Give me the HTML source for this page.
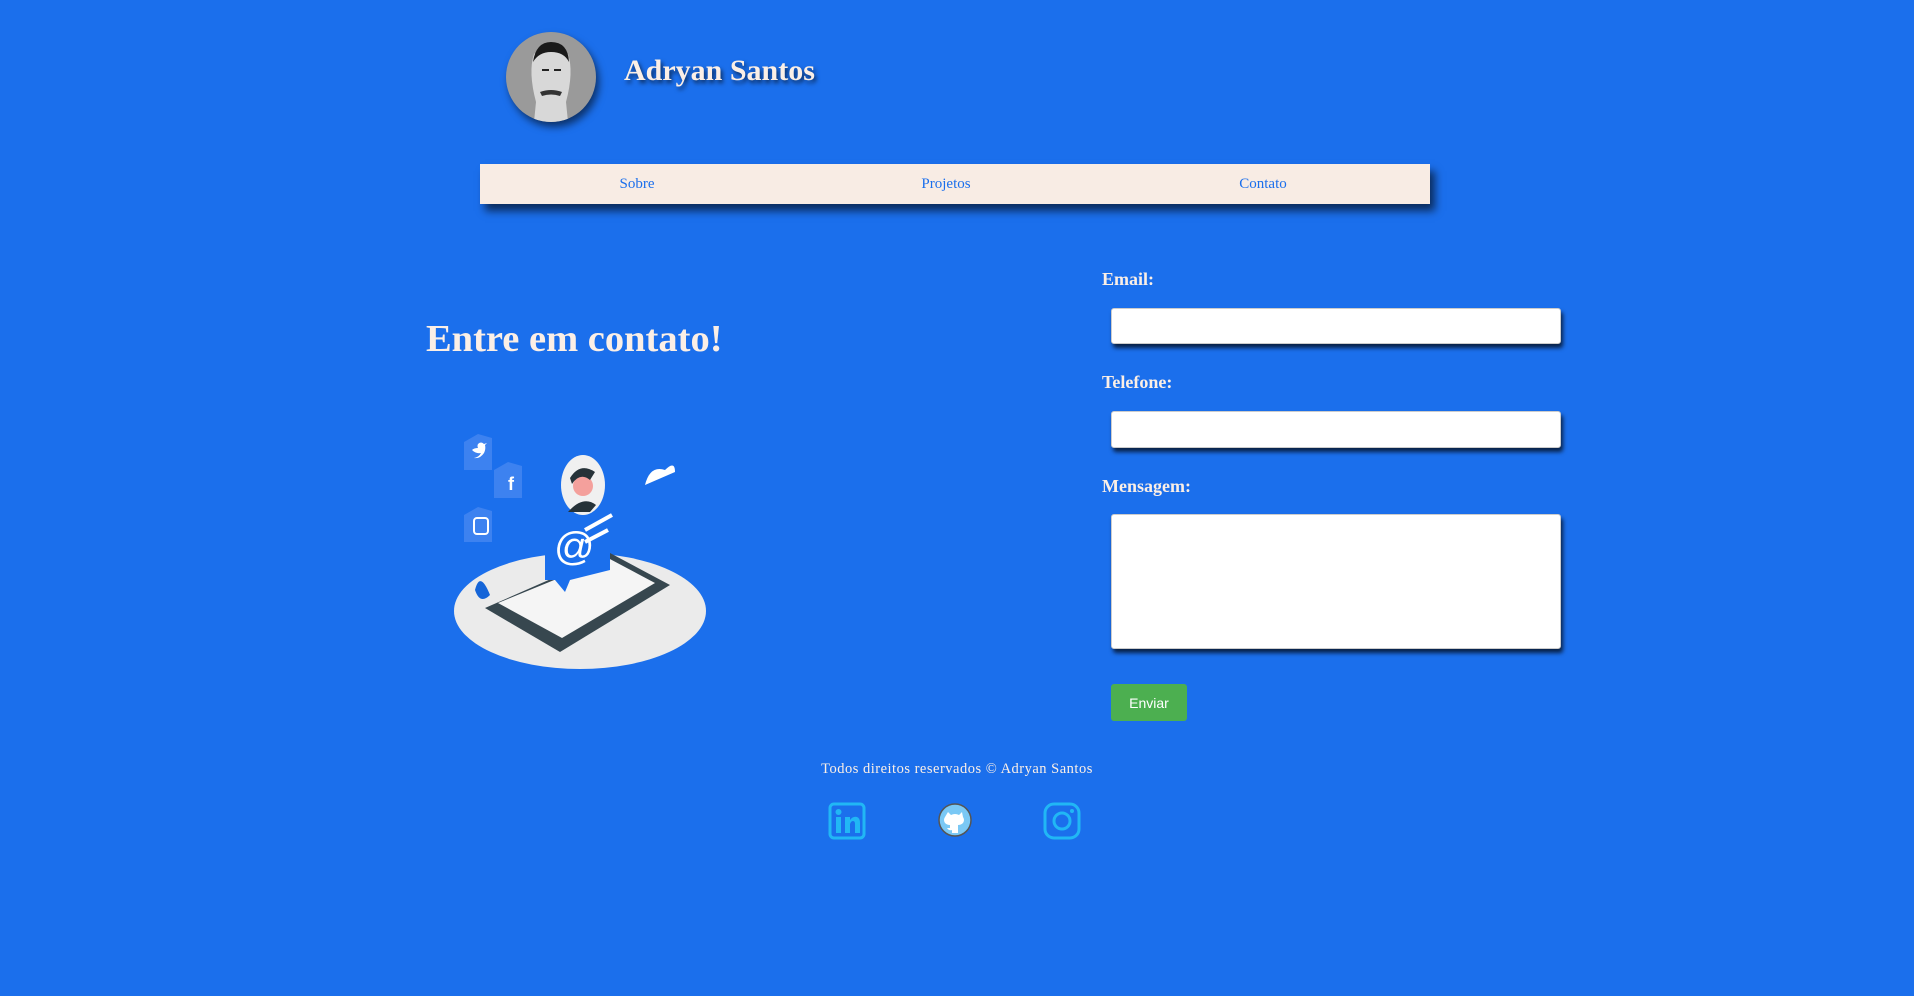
<!DOCTYPE html>
<html><head><meta charset="utf-8"><style>
*{margin:0;padding:0;box-sizing:border-box}
body{width:1914px;height:996px;background:#1b6fec;font-family:"Liberation Serif",serif;position:relative;overflow:hidden;color:#fbefe6}
.abs{position:absolute}
.avatar{left:506px;top:32px;width:90px;height:90px;border-radius:50%;background:#9a9a9a;box-shadow:3px 5px 8px rgba(0,0,0,.55);overflow:hidden}
.name{left:624px;top:54px;font-size:30px;font-weight:bold;text-shadow:2px 3px 4px rgba(0,0,0,.6)}
.nav{left:480px;top:164px;width:950px;height:40px;background:#f8ece4;box-shadow:5px 7px 8px rgba(0,0,0,.6)}
.nav span{position:absolute;top:12px;font-size:15px;color:#1b6fec;transform:translateX(-50%)}
h1{position:absolute;left:426px;top:317px;font-size:38.5px;font-weight:bold;color:#fbefe6}
label{position:absolute;left:1102px;font-size:18px;font-weight:bold}
.in{position:absolute;left:1111px;width:450px;background:#fff;border-radius:3px;border:1px solid #ccc;box-shadow:2px 4px 4px rgba(0,0,0,.7)}
.btn{left:1111px;top:684px;width:76px;height:37px;background:#4caf50;border-radius:3px;color:#fff;font-family:"Liberation Sans",sans-serif;font-size:14px;text-align:center;line-height:38px}
.foot{left:0;width:1914px;top:761px;text-align:center;font-size:14.5px;letter-spacing:.5px}
</style></head><body>
<div class="abs avatar"><svg width="90" height="90" viewBox="0 0 90 90">
<path d="M28 90 L30 70 Q22 40 28 22 Q45 8 62 22 Q68 40 60 70 L62 90Z" fill="#d8d8d8"/>
<path d="M27 30 Q30 10 45 10 Q62 10 63 30 Q58 20 45 20 Q33 20 27 30Z" fill="#1a1a1a"/>
<path d="M34 60 Q45 56 56 60 L54 64 Q45 61 36 64Z" fill="#333"/>
<path d="M36 38 h7 M48 38 h7" stroke="#222" stroke-width="2"/>
</svg></div>
<div class="abs name">Adryan Santos</div>
<div class="abs nav"><span style="left:157px">Sobre</span><span style="left:466px">Projetos</span><span style="left:783px">Contato</span></div>
<h1>Entre em contato!</h1>
<svg class="abs" style="left:450px;top:420px" width="260" height="260" viewBox="0 0 260 260">
<ellipse cx="130" cy="191" rx="126" ry="58" fill="#ebebeb"/>
<path d="M35 188 L160 133 L220 165 L110 232Z" fill="#37474f"/>
<path d="M48 183 L158 138 L205 163 L112 218Z" fill="#f5f5f5"/>
<path d="M95 100 L160 100 L160 150 L120 160 L115 172 L105 160 L95 160Z" fill="#1b6fec"/>
<ellipse cx="133" cy="65" rx="22" ry="30" fill="#f0f0f0"/>
<circle cx="133" cy="66" r="10" fill="#f4a09c"/>
<path d="M120 58 Q130 42 145 52 L140 60 Q130 52 122 64Z" fill="#263238"/>
<path d="M118 92 Q133 75 146 85 L140 92Z" fill="#263238"/>
<text x="104" y="140" font-size="40" fill="#fff" font-family="Liberation Sans">@</text>
<path d="M135 110 L162 95 M135 122 L158 110" stroke="#fff" stroke-width="4"/>
<path d="M14 22 L28 14 L42 18 L42 50 L14 50Z" fill="#3d82f0"/><path d="M22 30 q4 4 9 3 q-2 4 -7 5 q6 1 10 -5 q2 -4 1 -8 l2 -2 -3 1 q-3 -3 -6 0 q-1 2 0 4 q-4 0 -6 2z" fill="#fff"/>
<path d="M44 50 L58 42 L72 46 L72 78 L44 78Z" fill="#3d82f0"/><text x="58" y="70" fill="#fff" font-size="18" font-weight="bold" font-family="Liberation Sans">f</text>
<path d="M14 95 L28 87 L42 91 L42 122 L14 122Z" fill="#3d82f0"/><rect x="24" y="98" width="14" height="16" rx="3" fill="none" stroke="#fff" stroke-width="2"/>
<path d="M195 65 Q200 45 215 50 Q225 40 225 52 Z" fill="#fff"/>
<path d="M25 170 Q30 150 40 175 Q30 185 25 170Z" fill="#1565d8"/>
</svg>
<label style="top:269px">Email:</label>
<div class="in" style="top:308px;height:36px"></div>
<label style="top:372px">Telefone:</label>
<div class="in" style="top:411px;height:37px"></div>
<label style="top:476px">Mensagem:</label>
<div class="in" style="top:514px;height:135px"></div>
<div class="abs btn">Enviar</div>
<div class="abs foot">Todos direitos reservados © Adryan Santos</div>
<svg class="abs" style="left:828px;top:802px" width="38" height="38" viewBox="0 0 38 38"><rect x="2" y="2" width="34" height="34" rx="4" fill="none" stroke="#21b7f5" stroke-width="3"/><rect x="8" y="15" width="5" height="16" fill="#21b7f5"/><circle cx="10.5" cy="10" r="3" fill="#21b7f5"/><path d="M17 31V15h5v3q3-4 7-3 3 1 3 6v10h-5V22q0-3-2-3t-3 3v9Z" fill="#21b7f5"/></svg>
<svg class="abs" style="left:937px;top:802px" width="36" height="36" viewBox="0 0 36 36"><circle cx="18" cy="18" r="16" fill="#7ac8f5" stroke="#555" stroke-width="1.5"/><path d="M11 10l3 3q4-2 8 0l3-3 1 5q2 3 0 6-2 2-5 2v8h-6v-3q-3 1-5-2h3v-3q-3 0-5-2-2-3 0-6z" fill="#fff"/></svg>
<svg class="abs" style="left:1043px;top:802px" width="38" height="38" viewBox="0 0 38 38"><rect x="2" y="2" width="34" height="34" rx="9" fill="none" stroke="#21b7f5" stroke-width="3"/><circle cx="19" cy="19" r="8" fill="none" stroke="#21b7f5" stroke-width="3"/><circle cx="29" cy="9" r="2" fill="#21b7f5"/></svg>
</body></html>
